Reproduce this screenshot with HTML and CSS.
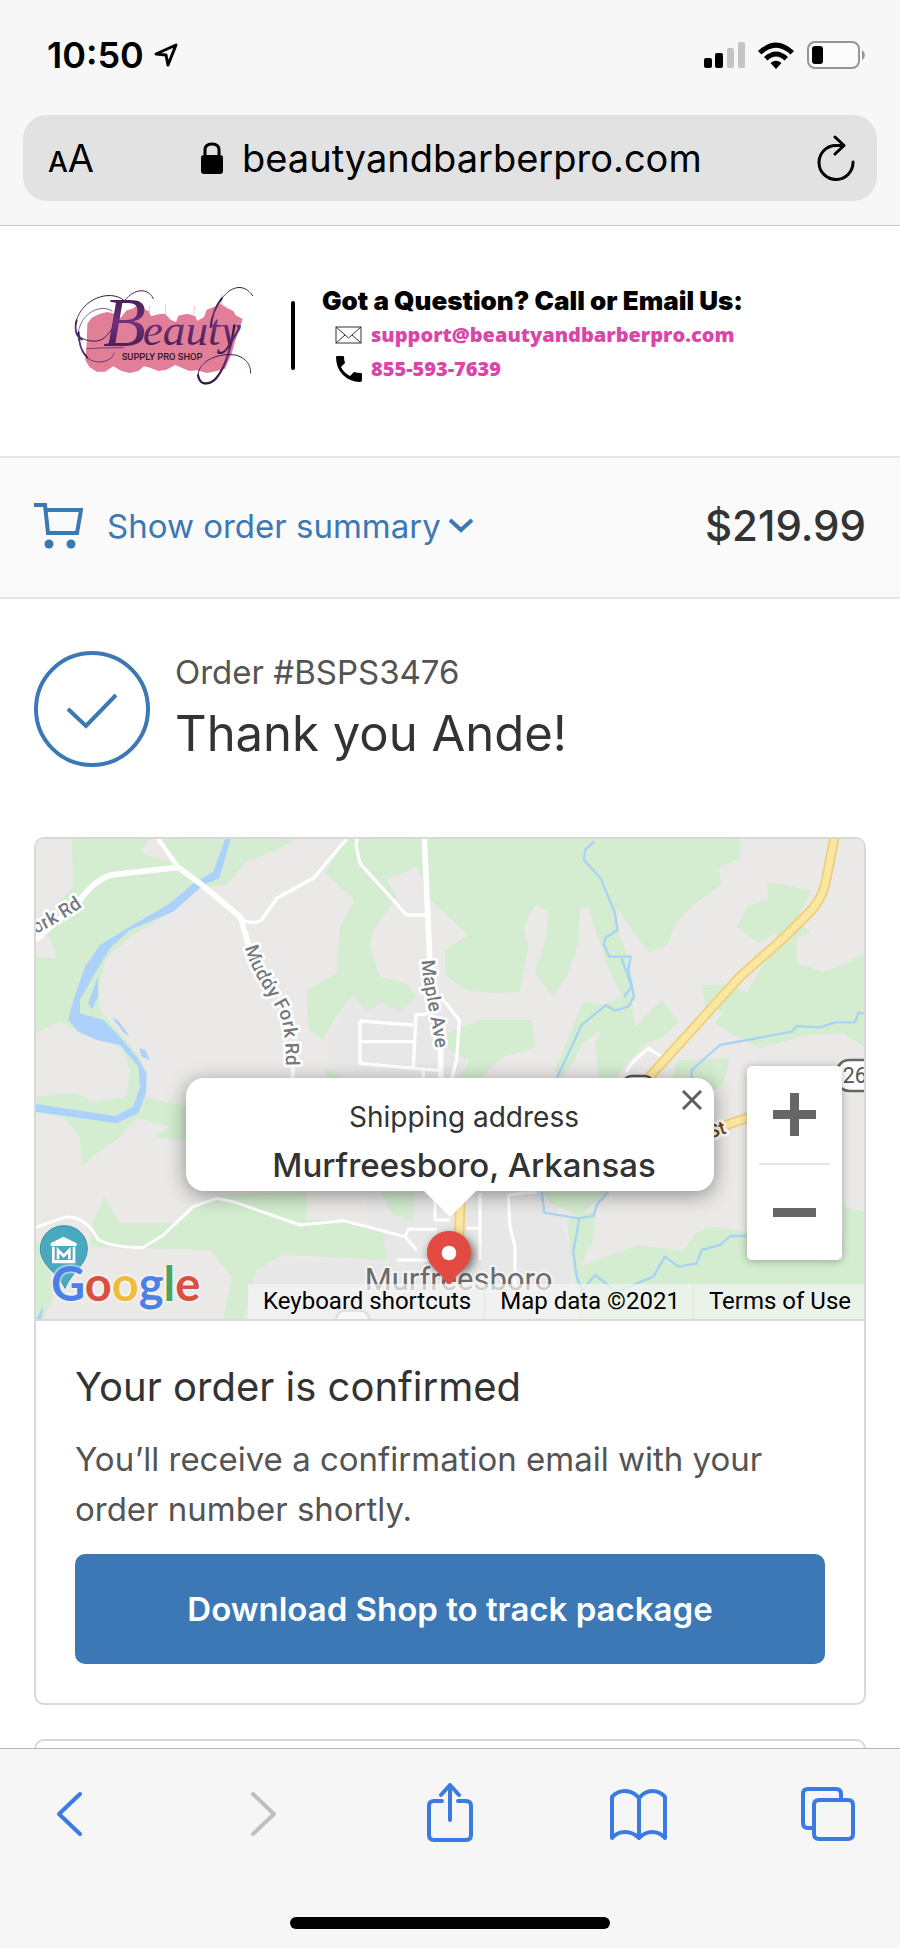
FILE: index.html
```html
<!DOCTYPE html>
<html lang="en">
<head>
  <meta charset="UTF-8">
  <meta name="viewport" content="width=device-width, initial-scale=1.0">

  <title>Thank you Ande! - Beauty Supply Pro Shop</title>

  <link rel="stylesheet" href="styles.css">
</head>
<body>

<header class="browser-top">
  <div class="status-bar">
    <div class="clock">
      <span>10:50</span>
      <svg width="24" height="25" viewBox="0 0 24 25" fill="none" stroke="#000" stroke-width="3" stroke-linejoin="round">
        <path d="M2 11 L22 2 L14 22 L12 12 Z"/>
      </svg>
    </div>
    <div class="status-icons">
      <svg width="41" height="26" viewBox="0 0 41 26">
        <rect x="0" y="16" width="8" height="10" rx="2"/>
        <rect x="11" y="11" width="8" height="15" rx="2"/>
        <rect x="23" y="6" width="7" height="20" rx="2" fill="#c4c4c4"/>
        <rect x="34" y="0" width="7" height="26" rx="2" fill="#c4c4c4"/>
      </svg>
      <svg width="36" height="27" viewBox="0 0 36 27">
        <path d="M0 9 Q18 -8 36 9 L32.500 12.500 Q18 -1 3.500 12.500 Z"/>
        <path d="M6 15 Q18 4 30 15 L26.500 18.500 Q18 10.500 9.500 18.500 Z"/>
        <path d="M12.500 21 Q18 16.500 23.500 21 L18 27 Z"/>
      </svg>
      <svg width="59" height="28" viewBox="0 0 59 28">
        <rect x="1" y="1" width="51" height="26" rx="7" fill="#fbfbfb" stroke="#969696" stroke-width="2"/>
        <rect x="5" y="5" width="11" height="18" rx="3"/>
        <path d="M55 9 Q58 11 58 14 Q58 17 55 19 Z" fill="#969696"/>
      </svg>
    </div>
  </div>

  <form class="url-bar">
    <button type="button" class="text-size" aria-label="Text size"><small>A</small>A</button>
    <label class="address" for="url">
      <svg width="22" height="32" viewBox="0 0 22 32">
        <rect x="0" y="13" width="22" height="19" rx="3"/>
        <path d="M4 14 V8 Q4 2 11 2 Q18 2 18 8 V14" fill="none" stroke="#000" stroke-width="3"/>
      </svg>
      <input type="text" id="url" value="beautyandbarberpro.com" aria-label="Address">
    </label>
    <button type="button" class="reload" aria-label="Reload">
      <svg width="38" height="46" viewBox="0 0 38 46" fill="none" stroke="#000" stroke-width="3" stroke-linecap="round" stroke-linejoin="round">
        <path d="M36 27 A17 17 0 1 1 19 10.500 H26"/>
        <path d="M18 2 L27 10.500 L18 19"/>
      </svg>
    </button>
  </form>
</header>

<main class="page">
  <div class="shop-header">
    <svg class="logo" viewBox="60 68 561 312" role="img" aria-label="Beauty Supply Pro Shop">
      <defs>
        <linearGradient id="ink" x1="0" y1="0" x2="0" y2="1">
          <stop offset="0" stop-color="#2c1740"/>
          <stop offset="0.500" stop-color="#70307c"/>
          <stop offset="1" stop-color="#301743"/>
        </linearGradient>
      </defs>
      <path fill="#e17f99" d="M112 190 L125 172 L150 160 L172 155 L195 160 L212 172 L230 150 L248 145 L262 135 L280 145 L296 152 L303 168 L325 162 L345 160 L362 178 L378 185 L385 166 L412 160 L436 168 L442 182 L462 170 L470 148 L492 140 L512 130 L530 142 L550 152 L556 164 L578 176 L570 200 L556 240 L545 280 L525 325 L500 332 L470 338 L440 330 L418 332 L395 322 L375 314 L350 328 L325 332 L300 322 L282 318 L265 332 L240 338 L215 332 L190 318 L165 334 L140 334 L118 320 L106 300 L110 250 Z"/>
      <path fill="none" stroke="#eba9b9" stroke-width="2" d="M266 120 V140 M300 135 L298 155 M347 132 V162 M434 135 L430 165 M515 100 V132"/>
      <g fill="none" stroke="url(#ink)" stroke-linecap="round">
        <path stroke-width="3" d="M222 120 C180 85 95 115 78 185 C70 225 100 245 140 242 C165 240 180 215 195 190"/>
        <path stroke-width="3" d="M225 120 C250 85 295 80 310 115"/>
        <path stroke-width="5" d="M80 180 C72 210 78 228 96 238"/>
        <path stroke-width="2" d="M186 152 C155 130 95 155 85 215 C85 275 110 305 150 305 C175 303 190 292 192 278"/>
        <path stroke-width="5" d="M86 215 C86 250 95 275 112 292"/>
        <path stroke-width="2" d="M110 265 Q160 262 220 262"/>
        <path stroke-width="7" d="M553 195 C545 250 530 310 505 345 C485 375 450 380 444 345"/>
        <path stroke-width="3" d="M444 345 C445 300 510 275 560 285 C590 295 603 315 602 338"/>
        <path stroke-width="6" d="M482 200 C486 165 495 140 515 115"/>
        <path stroke-width="3" d="M515 115 C540 80 580 65 608 106"/>
      </g>
      <text class="logo-script" x="160" y="258" fill="url(#ink)"><tspan class="logo-b">B</tspan><tspan x="278" y="255">eauty</tspan></text>
      <text class="logo-sub" x="215" y="300">SUPPLY PRO SHOP</text>
    </svg>

    <div class="divider"></div>

    <div class="contact">
      <h2>Got a Question? Call or Email Us:</h2>
      <a href="mailto:support@beautyandbarberpro.com">
        <svg width="27" height="18" viewBox="0 0 27 18" fill="none" stroke="#333" stroke-width="1">
          <rect x="1" y="1" width="25" height="16"/>
          <path d="M1 1 L13.500 12 L26 1 M1 17 L10 9 M26 17 L17 9"/>
        </svg>
        support@beautyandbarberpro.com
      </a>
      <a href="tel:8555937639">
        <svg width="27" height="26" viewBox="0 0 27 26">
          <path d="M1 1 Q1 0 2 0 H8 Q9 0 9 1 Q9 4 10 7 L6 11 Q9 17 15 20 L19 16 Q22 17 26 17 Q27 17 27 18 V24 Q27 26 25 26 Q15 26 8 19 Q1 12 1 1 Z"/>
        </svg>
        855-593-7639
      </a>
    </div>
  </div>

  <div class="summary">
    <button type="button" class="summary-toggle">
      <svg width="49" height="46" viewBox="0 0 49 46" fill="none" stroke="#3c78b4" stroke-width="4">
        <path d="M0 2 H11 L14 30 H43 L47 7 H12"/>
        <circle cx="15" cy="41" r="4.500" fill="#3c78b4" stroke="none"/>
        <circle cx="37" cy="41" r="4.500" fill="#3c78b4" stroke="none"/>
      </svg>
      <span>Show order summary</span>
      <svg class="chevron" width="24" height="15" viewBox="0 0 24 15" fill="none" stroke="#3c78b4" stroke-width="4">
        <path d="M1 2 L12 12 L23 2"/>
      </svg>
    </button>
    <span class="price">$219.99</span>
  </div>

  <div class="content">
    <div class="thanks">
      <svg width="116" height="116" viewBox="0 0 116 116" fill="none" stroke="#3c78b4" stroke-width="4">
        <circle cx="58" cy="58" r="56"/>
        <path d="M34 58 L52 75 L82 44"/>
      </svg>
      <div>
        <p class="order-number">Order #BSPS3476</p>
        <h1>Thank you Ande!</h1>
      </div>
    </div>

    <div class="card">
      <div class="map">
        <svg class="map-canvas" viewBox="18 27 2484 1440" preserveAspectRatio="xMidYMid slice">
          <defs>
            <path id="fork-rd" d="M-12 325 Q100 275 190 205"/>
            <path id="muddy-fork-rd" d="M645 352 C675 460 730 500 755 570 C765 610 768 650 768 730"/>
            <path id="maple-ave" d="M1175 392 C1178 480 1215 590 1220 700"/>
            <filter id="soft" x="-50%" y="-50%" width="200%" height="200%"><feGaussianBlur stdDeviation="14"/></filter>
          </defs>
          <rect x="0" y="0" width="2520" height="1500" fill="#eae9e7"/>

          <!-- town -->
          <path fill="#e7e7e8" d="M970 495 L1160 500 L1240 510 L1320 640 L1290 760 H900 L890 640 Z M1000 1090 H1560 L1640 1300 L1600 1467 H640 L690 1300 L1060 1290 Z"/>

          <!-- woods -->
          <g fill="#d4ecd0">
            <path d="M125 27 H360 L330 65 L440 105 L390 27 H800 L740 60 L650 95 L590 165 L500 175 L400 260 L300 320 L225 390 L205 480 L210 540 L280 620 L335 690 L350 800 L420 820 L480 830 V935 L370 920 L420 890 L320 865 L270 920 L200 970 L155 1010 L150 920 L100 860 L18 850 V800 L130 788 L190 815 L290 800 L300 720 L275 650 L180 620 L90 575 L18 610 V380 L80 385 L60 320 L18 310 V290 L130 170 Z"/>
            <path d="M940 27 H2130 V85 L2065 115 L2075 165 L1995 220 L1940 275 L1910 345 L1855 370 L1760 235 L1770 320 L1800 400 L1805 500 L1815 590 L1895 510 L1945 575 L1900 620 L1850 640 L1790 700 L1760 745 H1705 L1695 640 L1715 600 L1655 640 L1630 700 L1590 745 L1575 720 L1660 515 L1725 525 L1775 500 L1730 400 L1675 235 L1650 230 L1645 340 L1610 440 L1570 500 L1515 430 L1550 320 L1555 240 L1515 225 L1480 290 L1495 350 L1470 485 L1390 490 L1310 480 L1245 435 V360 L1315 315 L1200 210 L1160 110 L1070 150 L1100 200 L1030 300 L1020 350 L1050 440 L1130 460 L1160 500 L1105 545 L1060 515 L1010 545 L970 495 L910 570 L880 630 L835 600 L830 480 L920 430 L930 290 L975 210 L885 130 Z"/>
            <path d="M1250 610 L1350 570 L1505 570 L1515 655 L1420 680 L1350 745 H1285 L1320 690 L1255 660 Z"/>
            <path d="M2210 155 L2345 182 L2300 270 L2345 310 L2300 320 V400 L2380 425 L2430 410 L2502 370 V650 L2440 610 L2330 615 L2190 655 L2100 610 L2055 580 L2080 545 L2025 530 L2015 465 H2090 L2150 485 L2210 390 L2240 310 L2185 338 L2120 290 L2150 230 L2215 205 Z"/>
            <path d="M1940 690 L2100 685 L2080 760 L2040 790 L1990 745 H1930 Z"/>
            <path d="M2440 1130 L2502 1145 V1467 H1640 L1650 1310 L1820 1245 L1960 1262 L2000 1205 L2050 1190 L2150 1205 L2440 1210 Z"/>
            <path d="M1610 1170 L1700 1140 L1690 1230 L1650 1310 L1640 1390 L1625 1280 Z M1540 1085 H1730 L1650 1160 L1560 1120 Z"/>
            <path d="M190 1170 L222 1100 L270 1180 L440 1180 L500 1125 L560 1095 L830 1085 V1170 L950 1170 L1060 1200 L1070 1290 L760 1275 L680 1320 L640 1467 H580 L605 1340 L540 1260 L180 1250 Z"/>
            <path d="M1055 1085 H1150 V1175 L1085 1150 Z M18 1230 L60 1300 L70 1400 L40 1467 H18 Z M890 720 L950 745 H890 Z"/>
          </g>

          <!-- water -->
          <path fill="#acd2fb" d="M585 27 H602 L568 145 L520 165 L430 245 L300 300 L240 355 L195 430 L150 510 L150 550 L220 570 L270 620 L320 680 L350 730 L348 790 L325 850 L260 880 L18 845 V822 L255 858 L310 830 L330 770 L325 710 L270 645 L200 630 L145 605 L115 570 L130 510 L165 410 L210 345 L300 290 L420 220 L490 160 L550 125 Z"/>
          <path fill="#acd2fb" d="M203 440 L205 500 L185 538 L175 520 Z M245 562 L265 572 L298 618 L285 612 Z M328 655 L345 660 L360 690 L335 680 Z M40 1425 L35 1467 H20 Z"/>
          <g fill="none" stroke="#a9d3f5" stroke-width="7" stroke-linejoin="round">
            <path d="M1692 35 L1665 60 L1662 90 L1712 145 L1755 250 L1762 300 L1725 325 L1722 345 L1738 380 H1802 L1795 420 L1812 500 L1795 530 L1755 542 L1728 525 L1655 585 L1625 650 L1580 745"/>
            <path d="M1775 385 L1805 470 L1782 500 M2502 550 L2485 548 L2475 577 L2415 577 L2370 592 L2300 588 L2285 605 L2070 645 L1985 720 V745"/>
            <path d="M1535 1085 L1543 1148 L1645 1165 L1690 1158 L1702 1122 L1735 1085 M1648 1165 L1630 1265 L1640 1340 L1660 1390 M1650 1390 L1695 1335 L1760 1385 L1870 1340 L1905 1280 L1945 1310 L2000 1300 L2015 1260 L2070 1245 L2100 1218 H2150"/>
          </g>

          <!-- local roads -->
          <g fill="none" stroke="#fff" stroke-linejoin="round">
            <path stroke-width="17" d="M18 330 L150 210 Q200 140 255 133 L445 112 L520 168 L632 262 L665 380"/>
            <path stroke-width="13" d="M385 27 L445 112 M788 700 V750"/>
            <path stroke-width="17" d="M1183 27 L1200 400 M1232 640 V745"/>
            <path stroke-width="10" d="M635 270 Q675 285 695 270 L740 205 L850 145 L950 27 M982 27 L978 45 L990 100 L1130 255 H1190"/>
            <path stroke-width="10" d="M990 573 L1150 585 M990 635 H1150 M990 573 V700 L1230 722 M1150 710 L1158 555 L1200 550 M1180 715 V745 M1240 510 L1288 570 L1280 690 L1265 745"/>
            <path stroke-width="9" d="M18 1192 L110 1160 Q170 1160 205 1230 Q260 1255 340 1252 L400 1215 L490 1130 L560 1105 L610 1115 L810 1185 L940 1172 L1125 1220 L1160 1260"/>
            <path stroke-width="9" d="M1125 1220 L1135 1198 H1220 M1215 1090 V1170 H1260 M1100 1290 H1200 M1350 1090 V1290 M1310 1195 H1350 M1520 1085 L1435 1095 L1440 1190 L1455 1250 V1400 M1788 725 L1810 695 L1855 655 L1895 680"/>
          </g>

          <!-- highway -->
          <g fill="none" stroke-linejoin="round">
            <path stroke="#efcf78" stroke-width="31" d="M2414 20 L2385 165 Q2375 205 2345 240 L2260 325 L2130 440 L1850 750 M2070 892 L2160 860 M1292 1090 L1285 1290"/>
            <path stroke="#fbe7a4" stroke-width="20" d="M2414 20 L2385 165 Q2375 205 2345 240 L2260 325 L2130 440 L1850 750 M2070 892 L2160 860 M1292 1090 L1285 1290"/>
          </g>

          <!-- road shields -->
          <rect x="2420" y="690" width="120" height="93" rx="38" fill="#fff" stroke="#666" stroke-width="8"/>
          <text class="shield-text" x="2438" y="760">26</text>
          <rect x="1780" y="738" width="90" height="60" rx="25" fill="#fff" stroke="#555" stroke-width="8"/>
          <rect x="918" y="1442" width="100" height="60" rx="28" fill="#fff" stroke="#aaa" stroke-width="7"/>

          <g class="road-name">
            <text><textPath href="#fork-rd">Fork Rd</textPath></text>
            <text><textPath href="#muddy-fork-rd">Muddy Fork Rd</textPath></text>
            <text><textPath href="#maple-ave">Maple Ave</textPath></text>
            <text class="street" transform="translate(2040 926) rotate(-18)">St</text>
          </g>

          <!-- museum marker -->
          <path fill="#48a9bf" stroke="#3c93a8" stroke-width="3" d="M102 1187 C142 1187 172 1217 172 1257 C172 1305 120 1330 105 1375 C85 1330 31 1305 31 1257 C31 1217 62 1187 102 1187 Z"/>
          <path fill="#fff" d="M62 1248 V1240 L100 1220 L140 1240 V1248 Z M66 1250 H74 V1290 H128 V1250 H136 V1300 H66 Z"/>
          <path fill="none" stroke="#fff" stroke-width="8" d="M84 1288 V1260 L101 1278 L118 1260 V1288"/>

          <text class="town" x="1004" y="1380">Murfreesboro</text>

          <!-- pin -->
          <ellipse cx="1265" cy="1275" rx="68" ry="62" fill="#000" opacity="0.550" filter="url(#soft)"/>
          <path fill="#e24a42" d="M1257 1203 C1295 1203 1323 1232 1323 1268 C1323 1310 1282 1325 1268 1355 Q1257 1370 1246 1355 C1232 1325 1191 1310 1191 1268 C1191 1232 1219 1203 1257 1203 Z"/>
          <circle cx="1257" cy="1269" r="22" fill="#fff"/>
        </svg>

        <div class="info-window">
          <p class="info-label">Shipping address</p>
          <p class="info-place">Murfreesboro, Arkansas</p>
          <button type="button" class="info-close" aria-label="Close">
            <svg width="20" height="20" viewBox="0 0 20 20" fill="none" stroke="#5f5f5f" stroke-width="3">
              <path d="M1 1 L19 19 M19 1 L1 19"/>
            </svg>
          </button>
        </div>

        <div class="zoom-control">
          <button type="button" aria-label="Zoom in">
            <svg width="43" height="43" viewBox="0 0 43 43" fill="#666"><path d="M17 0 H26 V17 H43 V26 H26 V43 H17 V26 H0 V17 H17 Z"/></svg>
          </button>
          <button type="button" aria-label="Zoom out">
            <svg width="43" height="43" viewBox="0 0 43 43" fill="#666"><path d="M0 17 H43 V26 H0 Z"/></svg>
          </button>
        </div>

        <a class="google" href="#" aria-label="Google"><span class="g-blue">G</span><span class="g-red">o</span><span class="g-yellow">o</span><span class="g-blue">g</span><span class="g-green">l</span><span class="g-red">e</span></a>

        <div class="attribution">
          <button type="button">Keyboard shortcuts</button>
          <span>Map data ©2021</span>
          <a href="#">Terms of Use</a>
        </div>
      </div>

      <div class="card-body">
        <h2>Your order is confirmed</h2>
        <p>You’ll receive a confirmation email with your order number shortly.</p>
        <a class="download" href="#">Download Shop to track package</a>
      </div>
    </div>

    <div class="card next-card"></div>
  </div>
</main>

<nav class="toolbar">
  <div class="toolbar-buttons">
    <button type="button" aria-label="Back">
      <svg width="60" height="60" viewBox="0 0 60 60"><path d="M40 11 L19 31 L40 51"/></svg>
    </button>
    <button type="button" aria-label="Forward" disabled>
      <svg width="60" height="60" viewBox="0 0 60 60"><path d="M23 11 L44 31 L23 51"/></svg>
    </button>
    <button type="button" aria-label="Share">
      <svg width="60" height="60" viewBox="0 0 60 60"><path d="M22 18 H14 Q9 18 9 23 V52 Q9 57 14 57 H46 Q51 57 51 52 V23 Q51 18 46 18 H38 M30 37 V3 M21 12 L30 2 L39 12"/></svg>
    </button>
    <button type="button" aria-label="Bookmarks">
      <svg width="60" height="60" viewBox="0 0 60 60"><path d="M29 15 Q23 8 15 8 Q7 8 2 14 V55 Q7 49 15 49 Q23 49 29 55 Q35 49 42 49 Q50 49 55 55 V14 Q50 8 42 8 Q35 8 29 15 V55"/></svg>
    </button>
    <button type="button" aria-label="Tabs">
      <svg width="60" height="60" viewBox="0 0 60 60"><path d="M14 45 H8 Q3 45 3 40 V11 Q3 6 8 6 H36 Q41 6 41 11 V17 M19 17 H48 Q53 17 53 22 V51 Q53 56 48 56 H19 Q14 56 14 51 V22 Q14 17 19 17"/></svg>
    </button>
  </div>
  <div class="home-indicator"></div>
</nav>

</body>
</html>
```
FILE: styles.css
```css
* {
  box-sizing: border-box;
}

body {
  display: flex;
  flex-direction: column;
  height: 100vh;
  margin: 0;
  background-color: #fff;
  color: #333;
  font-family: Inter, "Liberation Sans", sans-serif;
  font-size: 33px;
}

h1, h2, p {
  margin: 0;
  font-weight: 400;
}

a {
  color: inherit;
  text-decoration: none;
}

button {
  padding: 0;
  border: none;
  background: none;
  color: inherit;
  font: inherit;
  cursor: pointer;
}

svg {
  display: block;
  flex-shrink: 0;
}

/* browser chrome */
.browser-top {
  padding: 33px 23px 24px;
  background-color: #f7f7f7;
  border-bottom: 1px solid #c8c8c8;
  color: #000;
}

.status-bar {
  display: flex;
  justify-content: space-between;
  align-items: center;
  padding: 0 11px 0 24px;
  line-height: 44px;
}

.clock {
  display: flex;
  align-items: center;
  gap: 10px;
  font-size: 36px;
  font-weight: 600;
}

.status-icons {
  display: flex;
  align-items: center;
  gap: 13px;
}

.url-bar {
  display: flex;
  justify-content: space-between;
  align-items: center;
  height: 86px;
  margin-top: 38px;
  padding: 0 22px 0 25px;
  background-color: #e2e2e2;
  border-radius: 24px;
}

.text-size {
  font-size: 38px;
}

.text-size small {
  font-size: 28px;
  font-weight: 500;
}

.address {
  display: flex;
  align-items: center;
  gap: 19px;
}

.address input {
  width: 468px;
  padding: 0;
  border: none;
  background: none;
  color: #000;
  font-family: inherit;
  font-size: 38px;
}

/* shop header */
.page {
  flex: 1;
  min-height: 0;
  overflow: hidden;
}

.shop-header {
  display: flex;
  align-items: center;
  padding: 57px 70px 69px;
}

.logo {
  width: 187px;
  height: 104px;
}

.logo-script {
  font-family: "Liberation Serif", serif;
  font-size: 136px;
  font-style: italic;
}

.logo-b {
  font-size: 210px;
}

.logo-sub {
  fill: #2b1a2c;
  font-family: "Liberation Sans Narrow", Roboto, sans-serif;
  font-size: 28px;
  font-weight: 500;
}

.divider {
  width: 4px;
  height: 69px;
  margin: 0 27px 0 34px;
  background-color: #000;
  border-radius: 2px;
}

.contact {
  line-height: 34px;
}

.contact h2 {
  color: #000;
  font-size: 26px;
  font-weight: 900;
}

.contact a {
  display: flex;
  align-items: center;
  gap: 9px;
  margin-left: 13px;
  color: #dc45a8;
  font-family: "Open Sans", sans-serif;
  font-size: 20px;
  font-weight: 800;
}

/* order summary */
.summary {
  display: flex;
  justify-content: space-between;
  align-items: center;
  height: 143px;
  padding: 0 34px 4px;
  background-color: #fafafa;
  border-top: 2px solid #e6e6e6;
  border-bottom: 2px solid #e6e6e6;
}

.summary-toggle {
  display: flex;
  align-items: center;
  color: #3c78b4;
}

.summary-toggle span {
  margin: 0 8px 0 24px;
}

.price {
  font-size: 42px;
  font-weight: 500;
}

/* thank you */
.content {
  padding: 48px 34px 0;
}

.thanks {
  display: flex;
  align-items: center;
  gap: 25px;
  margin-bottom: 66px;
}

.order-number {
  color: #545454;
  line-height: 50px;
}

h1 {
  font-size: 49px;
  line-height: 74px;
}

/* card */
.card {
  overflow: hidden;
  margin-bottom: 34px;
  border: 2px solid #d9d9d9;
  border-radius: 10px;
}

.next-card {
  height: 300px;
}

.card-body {
  padding: 38px 39px 39px;
}

.card-body h2 {
  font-size: 40px;
  line-height: 56px;
}

.card-body p {
  margin: 19px 0 20px;
  color: #545454;
  line-height: 50px;
}

.download {
  display: block;
  background-color: #3b78b5;
  border-radius: 10px;
  color: #fff;
  font-weight: 600;
  line-height: 110px;
  text-align: center;
}

/* map */
.map {
  position: relative;
  height: 482px;
  border-bottom: 2px solid #d9d9d9;
}

.map-canvas {
  width: 100%;
  height: 100%;
}

.road-name {
  fill: #74797d;
  stroke: #fff;
  stroke-width: 16px;
  stroke-linejoin: round;
  paint-order: stroke;
  font-family: Roboto, sans-serif;
  font-size: 57px;
  font-weight: 500;
}

.street {
  fill: #6b4415;
}

.shield-text {
  fill: #555;
  font-family: Roboto, sans-serif;
  font-size: 64px;
}

.town {
  fill: #6b6b6b;
  stroke: #f3f3f3;
  stroke-width: 12px;
  paint-order: stroke;
  font-family: Roboto, sans-serif;
  font-size: 93px;
}

.info-window {
  position: absolute;
  top: 239px;
  left: 50%;
  width: 528px;
  padding: 15px 0 2px 28px;
  transform: translateX(-50%);
  background-color: #fff;
  border-radius: 18px;
  box-shadow: 0 4px 20px rgba(0, 0, 0, 0.4);
  line-height: 48px;
  text-align: center;
}

.info-window::after {
  content: "";
  position: absolute;
  top: 100%;
  left: 50%;
  transform: translateX(-50%);
  border: 26px solid transparent;
  border-top-color: #fff;
  border-bottom: none;
}

.info-label {
  font-size: 28px;
}

.info-place {
  font-weight: 500;
}

.info-close {
  position: absolute;
  top: 12px;
  right: 12px;
}

.zoom-control {
  position: absolute;
  right: 22px;
  bottom: 59px;
  padding: 0 12px;
  background-color: #fff;
  border-radius: 5px;
  box-shadow: 0 1px 8px rgba(0, 0, 0, 0.3);
}

.zoom-control button {
  display: flex;
  justify-content: center;
  align-items: center;
  width: 71px;
  height: 97px;
}

.zoom-control button + button {
  border-top: 2px solid #e6e6e6;
}

.google {
  position: absolute;
  left: 15px;
  bottom: 6px;
  font-family: Lato, sans-serif;
  font-size: 47px;
  font-weight: 700;
  line-height: 60px;
  text-shadow: 0 0 3px #fff, 0 0 3px #fff;
}

.g-blue {
  color: #4d80e6;
}

.g-red {
  color: #d8503f;
}

.g-yellow {
  color: #efbb3c;
}

.g-green {
  color: #4ea35b;
}

.attribution {
  position: absolute;
  right: 0;
  bottom: 0;
  display: flex;
  background-color: rgba(245, 245, 245, 0.7);
  color: #000;
  font-family: Roboto, sans-serif;
  font-size: 24px;
  line-height: 35px;
}

.attribution > * {
  padding: 0 13px 0 15px;
}

.attribution > * + * {
  border-left: 1px solid #dfe8dd;
}

/* bottom toolbar */
.toolbar {
  padding: 34px 40px 19px;
  background-color: #f6f6f6;
  border-top: 1px solid #b8b8b8;
}

.toolbar-buttons {
  display: flex;
  justify-content: space-between;
  color: #3b7ae0;
}

.toolbar svg {
  fill: none;
  stroke: currentColor;
  stroke-width: 4;
  stroke-linecap: round;
  stroke-linejoin: round;
}

.toolbar button:disabled {
  color: #bfbfbf;
}

.home-indicator {
  width: 39%;
  height: 12px;
  margin: 74px auto 0;
  background-color: #000;
  border-radius: 6px;
}
```
